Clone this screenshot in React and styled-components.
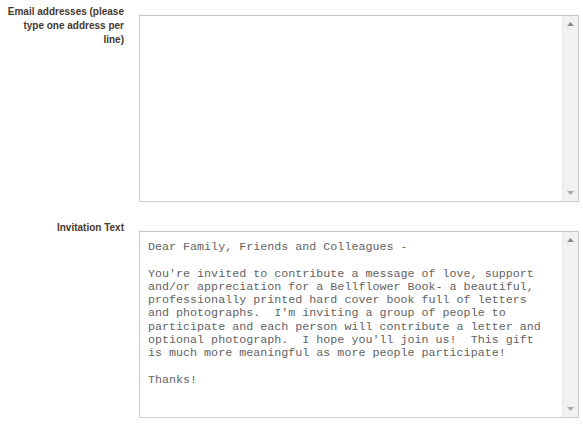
import React from "react";
import styled, { createGlobalStyle } from "styled-components";

const Global = createGlobalStyle`
  html, body { margin: 0; padding: 0; background: #ffffff; }
  body { font-family: "Liberation Sans", Arial, sans-serif; }
`;

const Form = styled.form`
  display: flex;
  flex-direction: column;
  gap: 19px;
  padding: 5px 0 0 4px;
`;

const Row = styled.div`
  display: flex;
  align-items: flex-start;
  gap: 15px;
`;

const Label = styled.label`
  width: 120px;
  flex: none;
  text-align: right;
  font-family: "Liberation Sans", Arial, sans-serif;
  font-weight: bold;
  font-size: 10px;
  line-height: 14px;
  color: #47382c;
`;

const Field = styled.div`
  margin-top: 10px;
  width: 440px;
  height: 187px;
  box-sizing: border-box;
  border: 1px solid #cdcdcd;
  border-top-color: #c4c4c4;
  box-shadow: 0 0 2px rgba(0, 0, 0, 0.06);
  display: flex;
  background: #fff;
`;

const Area = styled.textarea`
  flex: 1;
  min-width: 0;
  border: none;
  outline: none;
  resize: none;
  overflow: hidden;
  margin: 0;
  padding: 9px 8px 8px;
  font-family: "Liberation Mono", "Courier New", monospace;
  font-size: 11.7px;
  line-height: 13.3px;
  color: #636363;
  background: #fff;
  white-space: pre;
`;

const Scroll = styled.div`
  width: 16px;
  flex: none;
  background: #f1f1f1;
  border-left: 1px solid #e8e8e8;
  display: flex;
  flex-direction: column;
  justify-content: space-between;
  align-items: center;
  padding: 6px 0 6px;
  box-sizing: border-box;
`;

const Arrow = styled.svg`
  display: block;
  width: 7px;
  height: 4px;
  fill: ${(p) => (p.$dim ? "#a8a8a8" : "#8a8a8a")};
`;

const Up = ({ dim }) => (
  <Arrow $dim={dim} viewBox="0 0 7 4">
    <path d="M0 4 L3.5 0 L7 4 Z" />
  </Arrow>
);
const Down = ({ dim }) => (
  <Arrow $dim={dim} viewBox="0 0 7 4">
    <path d="M0 0 L7 0 L3.5 4 Z" />
  </Arrow>
);

const invitation = `Dear Family, Friends and Colleagues -

You're invited to contribute a message of love, support
and/or appreciation for a Bellflower Book- a beautiful,
professionally printed hard cover book full of letters
and photographs.  I'm inviting a group of people to
participate and each person will contribute a letter and
optional photograph.  I hope you'll join us!  This gift
is much more meaningful as more people participate!

Thanks!`;

const TextBox = ({ value }) => (
  <Field>
    <Area defaultValue={value} spellCheck={false} wrap="off" />
    <Scroll>
      <Up />
      <Down dim />
    </Scroll>
  </Field>
);

export default function App() {
  return (
    <>
      <Global />
      <Form onSubmit={(e) => e.preventDefault()}>
        <Row>
          <Label>Email addresses (please type one address per line)</Label>
          <TextBox value="" />
        </Row>
        <Row>
          <Label>Invitation Text</Label>
          <TextBox value={invitation} />
        </Row>
      </Form>
    </>
  );
}
